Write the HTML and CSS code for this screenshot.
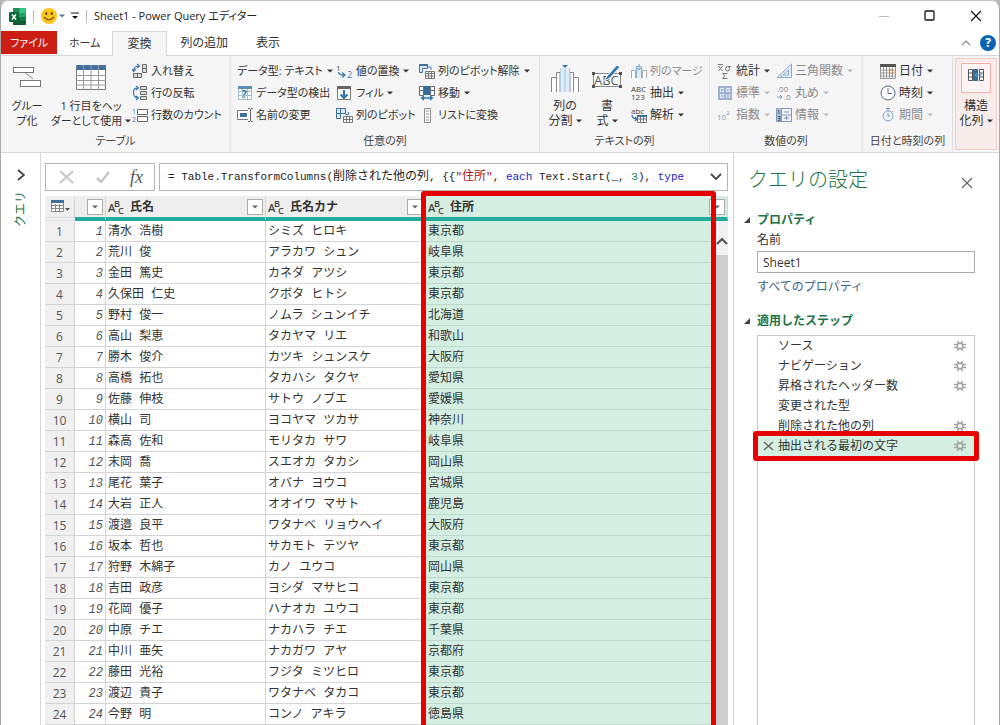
FILE: index.html
```html
<!DOCTYPE html>
<html lang="ja">
<head>
<meta charset="utf-8">
<title>Sheet1 - Power Query エディター</title>
<link rel="stylesheet" href="styles.css">
</head>
<body>
<svg class="defs" aria-hidden="true">
  <symbol id="gear" viewBox="0 0 12 12"><g fill="none" stroke="#a2a2a2" stroke-width="1.500"><circle cx="6" cy="6" r="2.800"/><path d="M4.500 3.500L3.500 1M7.500 3.500L8.500 1M4.500 8.500L3.500 11M7.500 8.500L8.500 11M0 4.500h3M9 4.500h3M0 7.500h3M9 7.500h3"/></g></symbol>
  <symbol id="tri" viewBox="0 0 6 6"><path d="M0 1.500h6L3 4.500z" fill="currentColor"/></symbol>
</svg>
<div class="window">
  <header class="titlebar">
    <svg class="excel" width="17" height="17" viewBox="0 0 17 17"><path d="M4 0h12q1 0 1 1v15q0 1-1 1H4z" fill="#21a366"/><path d="M4 0h6.500v5H4z" fill="#1f8f55"/><path d="M10.500 0H16q1 0 1 1v4h-6.500z" fill="#33c481"/><path d="M4 9h13v7q0 1-1 1H4z" fill="#185c37"/><path d="M10.500 9H17v4h-6.500z" fill="#107c41"/><rect y="4" width="10" height="10" rx="1" fill="#0b6a38"/><path d="M3 6.500l4 5M7 6.500l-4 5" stroke="#fff" stroke-width="1.500"/></svg>
    <span class="sep"></span>
    <button class="quick" aria-label="フィードバック"><svg width="16" height="16" viewBox="0 0 16 16"><circle cx="8" cy="8" r="8" fill="#fbc51c"/><ellipse cx="5.300" cy="5.500" rx="1" ry="1.500" fill="#594112"/><ellipse cx="10.700" cy="5.500" rx="1" ry="1.500" fill="#594112"/><path d="M3 9q5 5.500 10 0" fill="none" stroke="#76520e" stroke-width="1.200"/></svg><svg class="tri slate" width="6" height="6"><use href="#tri"/></svg></button>
    <button class="quick customize" aria-label="カスタマイズ"><svg width="8" height="8" viewBox="0 0 8 8"><path d="M0 1h8" stroke="#111"/><path d="M1 4h6L4 7z" fill="#111"/></svg></button>
    <span class="sep"></span>
    <h1>Sheet1 - Power Query エディター</h1>
    <div class="wincontrols">
      <button aria-label="最小化"><svg width="12" height="12"><path d="M1 6.500h10" stroke="#bbb"/></svg></button>
      <button aria-label="最大化"><svg width="12" height="12"><rect x="1" y="1" width="9" height="9" rx="1" fill="none" stroke="#111" stroke-width="1.300"/></svg></button>
      <button aria-label="閉じる"><svg width="12" height="12"><path d="M1 1l10 10M11 1L1 11" stroke="#111" stroke-width="1.200"/></svg></button>
    </div>
  </header>

  <nav class="tabs">
    <button class="file">ファイル</button>
    <button class="kana">ホーム</button>
    <button class="active">変換</button>
    <button>列の追加</button>
    <button>表示</button>
    <div class="tabtools">
      <button aria-label="リボンを折りたたむ"><svg width="10" height="6"><path d="M1 5l4-4 4 4" fill="none" stroke="#888" stroke-width="1.200"/></svg></button>
      <button class="help" aria-label="ヘルプ">?</button>
    </div>
  </nav>

  <section class="ribbon">
    <div class="group g-table">
      <div class="tools">
        <button class="big"><svg width="30" height="30" viewBox="0 0 30 30"><path d="M13 9.500l8 6.500" stroke="#888"/><g fill="#fff" stroke="#777"><rect x="1.500" y="4.500" width="20" height="5"/><rect x="8.500" y="17.500" width="20" height="6"/></g></svg><span>グルー<br>プ化</span></button>
        <button class="big header-btn"><svg width="30" height="30" viewBox="0 0 30 30"><path d="M.5 2.500h29v24H.5z" fill="#fff" stroke="#777"/><path d="M.5 2h29v5H.5z" fill="#41719c"/><path d="M0 12.500h30M0 17.500h30M0 22h30M7.500 2v25M15 2v25M22.500 2v25" stroke="#999" fill="none"/></svg><span>1 行目をヘッ<br>ダーとして使用<svg class="tri" width="6" height="6"><use href="#tri"/></svg></span></button>
        <div class="smalls">
          <button><svg width="16" height="16"><g fill="#ddd" stroke="#666"><path d="M10.500 1.500h4v8h-4zM10.500 5.500h4M1.500 10.500h8v4h-8zM5.500 10.500v4"/></g><path d="M1.500 8Q2 3 7 3M5 1l2.500 2L5 5M0 6l1.500 2.500L4 6" fill="none" stroke="#3a79ad" stroke-width="1.200"/></svg>入れ替え</button>
          <button><svg width="16" height="16"><g fill="#ddd" stroke="#666"><path d="M8.500 1.500h6v3h-6zM8.500 6.500h6v3h-6zM8.500 11.500h6v3h-6z"/></g><path d="M6 3Q1 3 1.500 8T6 13M4 1l2.500 2L4 5M4 11l2.500 2L4 15" fill="none" stroke="#3a79ad" stroke-width="1.200"/></svg>行の反転</button>
          <button><svg width="16" height="16"><path d="M5.500 2.500h10v5h-10zM5.500 9.500h10v5h-10z" fill="#fff" stroke="#666"/><text x="0" y="7" font-size="7" fill="#3a79ad">1</text><text x="0" y="15" font-size="7" fill="#3a79ad">2</text></svg>行数のカウント</button>
        </div>
      </div>
      <h2>テーブル</h2>
    </div>

    <div class="group g-any">
      <div class="tools">
        <div class="smalls">
          <button class="datatype">データ型: テキスト<svg class="tri" width="6" height="6"><use href="#tri"/></svg></button>
          <button><svg width="16" height="16"><path d="M1.500 2.500h13v12h-13zM1.500 6.500h13M1.500 10.500h13M5.500 2v12M10.500 2v12" fill="#fff" stroke="#a8bccb"/><path d="M1 1h14v3H1z" fill="#5d8fb8"/><text x="5" y="13" font-size="10" font-weight="700" fill="#2d6d9f">?</text></svg>データ型の検出</button>
          <button><svg width="16" height="16"><path d="M11 3.500H.5v9H11" fill="#fff" stroke="#777"/><path d="M3 6h7v4H3z" fill="#41719c"/><path d="M11 1.500h2M14 1.500h2M13.500 2v12M11 14.500h2M14 14.500h2" stroke="#666" fill="none"/></svg>名前の変更</button>
        </div>
        <div class="smalls c2">
          <button><svg width="18" height="16"><text x="0" y="8" font-size="8">1</text><text x="11" y="15" font-size="9" fill="#3a79ad">2</text><path d="M2.500 9q0 3 6 3M6 9.500L9 12l-3 2.500" fill="none" stroke="#3a79ad" stroke-width="1.300"/></svg>値の置換<svg class="tri" width="6" height="6"><use href="#tri"/></svg></button>
          <button><svg width="18" height="16"><path d="M1.500 2.500h13v12h-13z" fill="#fff" stroke="#777"/><path d="M1 1h14v3H1z" fill="#666"/><path d="M8 5v8M4.500 9.500L8 13l3.500-3.500" fill="none" stroke="#2d72aa" stroke-width="2"/></svg>フィル<svg class="tri" width="6" height="6"><use href="#tri"/></svg></button>
          <button><svg width="18" height="16"><path d="M.5 1.500h9v5h-5v5h-4zM.5 6.500h4M4.500 1v5" fill="#dce8f2" stroke="#3d719d"/><path d="M7.500 9.500h9v6h-9zM7.500 12.500h9M10.500 9v6M13.500 9v6" fill="#fff" stroke="#777"/><path d="M9 7l3 1 1-3" fill="none" stroke="#3a79ad"/></svg>列のピボット</button>
        </div>
        <div class="smalls c3">
          <button><svg width="16" height="16"><path d="M.5 1.500h8v4h-5v4h-3z" fill="#dce8f2" stroke="#3d719d"/><path d="M6.500 8.500h9v7h-9zM6.500 10.500h9M6.500 13h9M9.500 8v7M12.500 8v7" fill="#fff" stroke="#777"/><path d="M1 1h8v2H1z" fill="#3d719d"/><path d="M9 4h3v3" stroke="#3a79ad" fill="none"/></svg>列のピボット解除<svg class="tri" width="6" height="6"><use href="#tri"/></svg></button>
          <button><svg width="16" height="16"><path d="M.5 1.500h4v9h-4zM.5 5.500h4M11.500 1.500h4v9h-4zM11.500 5.500h4" fill="#fff" stroke="#667"/><path d="M5 1h6v9H5z" fill="#2f6e9f"/><path d="M3 13h10M5 11l-2.500 2L5 15M11 11l2.500 2L11 15" stroke="#2d72aa" stroke-width="1.300" fill="none"/></svg>移動<svg class="tri" width="6" height="6"><use href="#tri"/></svg></button>
          <button><svg width="16" height="16"><path d="M5.500 1.500h6v14h-6z" fill="#fff" stroke="#888"/><path d="M7 4h3M7 7h3M7 10h3M7 13h3" stroke="#888"/></svg>リストに変換</button>
        </div>
      </div>
      <h2>任意の列</h2>
    </div>

    <div class="group g-text">
      <div class="tools">
        <button class="big"><svg width="30" height="30" viewBox="0 0 30 30"><path d="M1.500 29V14.500h5V29M23.500 29V14.500h5V29M6.500 29V9.500H10V29M20 29V9.500h3.500V29" fill="#fff" stroke="#888"/><path d="M10 5h10v24H10z" fill="#dcecf8"/><path d="M10.500 29V5M19.500 29V5" stroke="#b4cde0"/><path d="M15 5v24" stroke="#a5c4dc"/><path d="M12 2h6l-3 3z" fill="#2d72aa"/></svg><span>列の<br>分割<svg class="tri" width="6" height="6"><use href="#tri"/></svg></span></button>
        <button class="big"><svg width="32" height="30" viewBox="0 0 32 30"><path d="M2.500 10.500h27v13h-27z" fill="#fff" stroke="#888"/><text x="3" y="22" font-size="13" fill="#555">ABC</text><g fill="#555"><path d="M1 9h3v3H1zM28 9h3v3h-3zM1 22h3v3H1zM28 22h3v3h-3z"/></g><path d="M13 18l3-5L26 2l3 2-10 11z" fill="#347ab2" stroke="#f6f5f6"/></svg><span>書<br>式<svg class="tri" width="6" height="6"><use href="#tri"/></svg></span></button>
        <div class="smalls">
          <button class="kana" disabled><svg width="16" height="16"><path d="M.5 15V7.500h4V15M11.500 15V7.500h4V15" fill="#fff" stroke="#aaa"/><path d="M5.500 15V3.500h5V15" fill="#dcecf8" stroke="#8ab1d0"/><path d="M8 1v6M6 5l2 2 2-2" fill="none" stroke="#7ca6c8"/></svg>列のマージ</button>
          <button><svg width="16" height="16"><text x="0" y="7" font-size="8"><tspan x="0">ABC</tspan><tspan x="0" y="15">123</tspan></text></svg>抽出<svg class="tri" width="6" height="6"><use href="#tri"/></svg></button>
          <button><svg width="16" height="16"><text x="0" y="7" font-size="8">abc</text><path d="M6.500 8.500h9v7h-9zM6.500 12h9M9.500 8v7M12.500 8v7" fill="#fff" stroke="#777"/><path d="M6 8h10v2H6z" fill="#3d719d"/><path d="M1 8q0 4 5 4M4 10l2 2-2 2" fill="none" stroke="#2d72aa" stroke-width="1.200"/></svg>解析<svg class="tri" width="6" height="6"><use href="#tri"/></svg></button>
        </div>
      </div>
      <h2>テキストの列</h2>
    </div>

    <div class="group g-num">
      <div class="tools">
        <div class="smalls">
          <button><svg width="16" height="16"><path d="M1 1.500h5M1.500 3l4 5M5.500 3l-4 5M14 3.500h-3q-2.500 0-2.500 2.200T10.500 8t2-2.300T11 3.500M10.500 10.500h-5l2.500 2.300-2.500 2.700h5" fill="none" stroke="#777"/></svg>統計<svg class="tri" width="6" height="6"><use href="#tri"/></svg></button>
          <button disabled><svg width="16" height="16"><path d="M2 2h12v12H2zM8 2v12M2 8h12" fill="#dfe7f1" stroke="#9db2d0" stroke-width="2"/><path d="M4 5h2M5 4v2M10 5h2M4 11h2M10 10h2M10 12h2" stroke="#8097b9"/></svg>標準<svg class="tri" width="6" height="6"><use href="#tri"/></svg></button>
          <button disabled><svg width="16" height="16"><text x="0" y="13" font-size="8" fill="#8b9db8">10<tspan font-size="6" y="8">2</tspan></text></svg>指数<svg class="tri" width="6" height="6"><use href="#tri"/></svg></button>
        </div>
        <div class="smalls c2">
          <button disabled><svg width="16" height="16"><path d="M1 14.500L15.500 1v13.500zM7 12l5.500-5v5z" fill="#e6effa" stroke="#8ba8cd"/><path d="M4 11q2 1 1.500 3" fill="none" stroke="#8ba8cd"/></svg>三角関数<svg class="tri" width="6" height="6"><use href="#tri"/></svg></button>
          <button disabled><svg width="16" height="16"><text y="7" font-size="8" fill="#888"><tspan x="1">.00</tspan><tspan x="8" y="15">.0</tspan></text><path d="M1 12h5M4 10l2 2-2 2" stroke="#7897bd" fill="none"/></svg>丸め<svg class="tri" width="6" height="6"><use href="#tri"/></svg></button>
          <button disabled><svg width="16" height="16"><path d="M.5 1.500h15v13H.5zM5.500 1v13M.5 8h15" fill="#edf2f9" stroke="#8397b4"/><path d="M1 1h4v13H1z" fill="#a8bdd9"/><path d="M2 3.500h1V7M2 9.500h2v4H2M2 11.500h2" fill="none" stroke="#567"/><path d="M8 5h5M8 11h5M10.500 9v4" stroke="#8397b4"/></svg>情報<svg class="tri" width="6" height="6"><use href="#tri"/></svg></button>
        </div>
      </div>
      <h2>数値の列</h2>
    </div>

    <div class="group g-date">
      <div class="tools">
        <div class="smalls">
          <button><svg width="16" height="16"><path d="M.5 1.500h15v14H.5zM3.500 4v11M6.500 4v11M9.500 4v11M12.500 4v11M.5 7h15M.5 10h15M.5 13h15" fill="#fff" stroke="#999"/><path d="M0 1h16v3H0z" fill="#555"/><path d="M9.500 7h3v3h-3z" fill="#fff" stroke="#dc7a28"/></svg>日付<svg class="tri" width="6" height="6"><use href="#tri"/></svg></button>
          <button><svg width="16" height="16"><circle cx="8" cy="8" r="7" fill="#fff" stroke="#4d6c87"/><path d="M8 3v5.500h4" fill="none" stroke="#4d6c87"/></svg>時刻<svg class="tri" width="6" height="6"><use href="#tri"/></svg></button>
          <button disabled><svg width="16" height="16"><circle cx="8" cy="9" r="5" fill="#eef4fa" stroke="#8ba3bd"/><path d="M8 6v3h2M8 4V2M6 1.500h4M12 4l1 1" fill="none" stroke="#7893b1"/></svg>期間<svg class="tri" width="6" height="6"><use href="#tri"/></svg></button>
        </div>
      </div>
      <h2>日付と時刻の列</h2>
    </div>

    <div class="group g-struct">
      <button class="struct"><span class="structicon"><svg width="16" height="14"><path d="M.5 1.500h4v11h-4zM.5 5h4M.5 9h4M11.500 1.500h4v11h-4zM11.500 5h4M11.500 9h4" fill="#fff" stroke="#555"/><path d="M5 1h5v12H5z" fill="#2f6e9f"/><path d="M7 7h6M9 5L7 7l2 2M11.500 5l2 2-2 2" fill="none" stroke="#5ba0d6"/></svg></span><span>構造<br>化列<svg class="tri" width="6" height="6"><use href="#tri"/></svg></span></button>
    </div>
  </section>

  <main class="workspace">
    <aside class="rail">
      <button aria-label="クエリ ウィンドウを展開"><svg width="8" height="12"><path d="M1 1l6 5-6 5" fill="none" stroke="#444" stroke-width="1.800"/></svg></button>
      <span>クエリ</span>
    </aside>

    <section class="editor">
      <div class="formula">
        <div class="fxbox">
          <button aria-label="取り消し"><svg width="16" height="14"><path d="M1 1l13 12M14 1L1 13" stroke="#c6c6c6" stroke-width="2"/></svg></button>
          <button aria-label="確定"><svg width="14" height="12"><path d="M1 7l4 4 8-10" fill="none" stroke="#c6c6c6" stroke-width="2.500"/></svg></button>
          <button class="fx" aria-label="ステップの追加">fx</button>
        </div>
        <div class="fxtext" role="textbox">
          <code>= Table.TransformColumns(<span class="ja">削除された他の列</span>, {{<span class="str">"<span class="ja">住所</span>"</span>, <span class="key">each</span> Text.Start(_, <span class="num">3</span>), <span class="key">type</span></code>
          <button aria-label="数式バーを展開"><svg width="12" height="8"><path d="M1 1l5 5 5-5" fill="none" stroke="#444" stroke-width="1.800"/></svg></button>
        </div>
      </div>

      <div class="grid">
        <table>
          <colgroup><col class="w-row"><col class="w-idx"><col class="w-name"><col class="w-kana"><col></colgroup>
          <thead><tr>
            <th class="corner"><button aria-label="テーブル メニュー"><svg width="20" height="13"><path d="M.5 1.500h12v10H.5zM.5 5.500h12M.5 8.500h12M4.500 4v8M8.500 4v8" fill="#fff" stroke="#888"/><path d="M0 0h13v3H0z" fill="#3d719d"/><path d="M14 8h5l-2.500 3z" fill="#555"/></svg></button></th>
            <th><div class="head"><button class="filter" aria-label="フィルター"><svg class="tri" width="6" height="6"><use href="#tri"/></svg></button></div></th>
            <th><div class="head"><svg class="abc" width="18" height="18"><text x="0" y="14" font-size="11">A<tspan x="6" y="9" font-size="9">B</tspan><tspan x="10" y="16" font-size="9">C</tspan></text></svg>氏名<button class="filter" aria-label="フィルター"><svg class="tri" width="6" height="6"><use href="#tri"/></svg></button></div></th>
            <th><div class="head"><svg class="abc" width="18" height="18"><text x="0" y="14" font-size="11">A<tspan x="6" y="9" font-size="9">B</tspan><tspan x="10" y="16" font-size="9">C</tspan></text></svg>氏名カナ<button class="filter" aria-label="フィルター"><svg class="tri" width="6" height="6"><use href="#tri"/></svg></button></div></th>
            <th class="sel"><div class="head"><svg class="abc" width="18" height="18"><text x="0" y="14" font-size="11">A<tspan x="6" y="9" font-size="9">B</tspan><tspan x="10" y="16" font-size="9">C</tspan></text></svg>住所<button class="filter" aria-label="フィルター"><svg class="tri" width="6" height="6"><use href="#tri"/></svg></button></div></th>
          </tr></thead>
          <tbody>
            <tr><th>1</th><td>1</td><td>清水 浩樹</td><td>シミズ ヒロキ</td><td>東京都</td></tr>
            <tr><th>2</th><td>2</td><td>荒川 俊</td><td>アラカワ シュン</td><td>岐阜県</td></tr>
            <tr><th>3</th><td>3</td><td>金田 篤史</td><td>カネダ アツシ</td><td>東京都</td></tr>
            <tr><th>4</th><td>4</td><td>久保田 仁史</td><td>クボタ ヒトシ</td><td>東京都</td></tr>
            <tr><th>5</th><td>5</td><td>野村 俊一</td><td>ノムラ シュンイチ</td><td>北海道</td></tr>
            <tr><th>6</th><td>6</td><td>高山 梨恵</td><td>タカヤマ リエ</td><td>和歌山</td></tr>
            <tr><th>7</th><td>7</td><td>勝木 俊介</td><td>カツキ シュンスケ</td><td>大阪府</td></tr>
            <tr><th>8</th><td>8</td><td>高橋 拓也</td><td>タカハシ タクヤ</td><td>愛知県</td></tr>
            <tr><th>9</th><td>9</td><td>佐藤 伸枝</td><td>サトウ ノブエ</td><td>愛媛県</td></tr>
            <tr><th>10</th><td>10</td><td>横山 司</td><td>ヨコヤマ ツカサ</td><td>神奈川</td></tr>
            <tr><th>11</th><td>11</td><td>森高 佐和</td><td>モリタカ サワ</td><td>岐阜県</td></tr>
            <tr><th>12</th><td>12</td><td>末岡 喬</td><td>スエオカ タカシ</td><td>岡山県</td></tr>
            <tr><th>13</th><td>13</td><td>尾花 葉子</td><td>オバナ ヨウコ</td><td>宮城県</td></tr>
            <tr><th>14</th><td>14</td><td>大岩 正人</td><td>オオイワ マサト</td><td>鹿児島</td></tr>
            <tr><th>15</th><td>15</td><td>渡邉 良平</td><td>ワタナベ リョウヘイ</td><td>大阪府</td></tr>
            <tr><th>16</th><td>16</td><td>坂本 哲也</td><td>サカモト テツヤ</td><td>東京都</td></tr>
            <tr><th>17</th><td>17</td><td>狩野 木綿子</td><td>カノ ユウコ</td><td>岡山県</td></tr>
            <tr><th>18</th><td>18</td><td>吉田 政彦</td><td>ヨシダ マサヒコ</td><td>東京都</td></tr>
            <tr><th>19</th><td>19</td><td>花岡 優子</td><td>ハナオカ ユウコ</td><td>東京都</td></tr>
            <tr><th>20</th><td>20</td><td>中原 チエ</td><td>ナカハラ チエ</td><td>千葉県</td></tr>
            <tr><th>21</th><td>21</td><td>中川 亜矢</td><td>ナカガワ アヤ</td><td>京都府</td></tr>
            <tr><th>22</th><td>22</td><td>藤田 光裕</td><td>フジタ ミツヒロ</td><td>東京都</td></tr>
            <tr><th>23</th><td>23</td><td>渡辺 貴子</td><td>ワタナベ タカコ</td><td>東京都</td></tr>
            <tr><th>24</th><td>24</td><td>今野 明</td><td>コンノ アキラ</td><td>徳島県</td></tr>
          </tbody>
        </table>
        <div class="scrollbar"><svg width="12" height="8"><path d="M1 7l5-5 5 5" fill="none" stroke="#555" stroke-width="2.200"/></svg><div class="thumb"></div></div>
        <div class="mark column-mark"></div>
      </div>
    </section>

    <aside class="settings">
      <div class="settings-title"><h2>クエリの設定</h2><button aria-label="閉じる"><svg width="12" height="12"><path d="M1 1l10 10M11 1L1 11" stroke="#666" stroke-width="1.200"/></svg></button></div>
      <h3><svg width="6" height="6"><path d="M6 0v6H0z" fill="#444"/></svg>プロパティ</h3>
      <div class="props">
        <label for="qname">名前</label>
        <input id="qname" type="text" value="Sheet1">
        <a href="#">すべてのプロパティ</a>
      </div>
      <h3 class="steps-title"><svg width="6" height="6"><path d="M6 0v6H0z" fill="#444"/></svg>適用したステップ</h3>
      <ul class="steps">
        <li><span>ソース</span><button aria-label="設定"><svg width="12" height="12"><use href="#gear"/></svg></button></li>
        <li><span>ナビゲーション</span><button aria-label="設定"><svg width="12" height="12"><use href="#gear"/></svg></button></li>
        <li><span>昇格されたヘッダー数</span><button aria-label="設定"><svg width="12" height="12"><use href="#gear"/></svg></button></li>
        <li><span>変更された型</span></li>
        <li><span>削除された他の列</span><button aria-label="設定"><svg width="12" height="12"><use href="#gear"/></svg></button></li>
        <li class="current"><button class="del" aria-label="削除"><svg width="11" height="10"><path d="M1 1l9 8M10 1L1 9" stroke="#666" stroke-width="1.500"/></svg></button><span>抽出される最初の文字</span><button aria-label="設定"><svg width="12" height="12"><use href="#gear"/></svg></button><div class="mark step-mark"></div></li>
      </ul>
    </aside>
  </main>
</div>
</body>
</html>
```
FILE: styles.css
```css
* { box-sizing: border-box; }
body {
  margin: 0;
  background: #b9b5b9;
  color: #333;
  font: 12px/16px "Open Sans", "Noto Sans CJK JP", sans-serif;
}
h1, h2, h3, ul { margin: 0; padding: 0; font-size: inherit; font-weight: 400; }
button {
  padding: 0;
  border: 0;
  background: none;
  color: inherit;
  font: inherit;
  text-align: inherit;
  white-space: nowrap;
}
svg { flex: none; font-family: "Open Sans", sans-serif; fill: #444; }
.defs { position: absolute; width: 0; height: 0; }
.tri { color: #333; }
.window {
  display: flex;
  flex-direction: column;
  height: 100vh;
  overflow: hidden;
  border-left: 1px solid #aaa;
  border-right: 1px solid #aaa;
  border-top: 1px solid #c4c4c4;
  border-radius: 8px 8px 0 0;
  background: #fff;
}

/* title bar */
.titlebar { display: flex; align-items: center; height: 30px; padding-left: 8px; flex: none; }
.sep { width: 1px; height: 13px; margin: 0 7px; background: #bbb; }
.quick { display: flex; align-items: center; gap: 2px; }
.customize { margin-left: 6px; }
.slate { color: #4d7d8d; }
.titlebar h1 { color: #222; font-size: 11px; font-feature-settings: "palt"; white-space: nowrap; }
.wincontrols { display: flex; margin-left: auto; }
.wincontrols button { display: flex; justify-content: center; width: 46px; }

/* ribbon tabs */
.tabs { display: flex; height: 25px; flex: none; border-bottom: 1px solid #d8d6d8; font-feature-settings: "palt"; }
.tabs > button { height: 24px; padding: 0 14px; color: #333; }
.tabs > .kana { padding: 0 12px; }
.tabs > .file { height: 23px; width: 56px; padding: 0; background: #cb1d12; color: #fff; font-size: 11px; text-align: center; }
.tabs > .active { height: 25px; border: 1px solid #d8d6d8; border-bottom: 0; background: #f6f5f6; }
.kana { font-size: 11px; }
.tabtools { display: flex; align-items: center; gap: 9px; margin-left: auto; padding-right: 3px; }
.tabtools button { display: flex; }
.tabtools .help {
  justify-content: center;
  width: 16px;
  height: 16px;
  border-radius: 50%;
  background: #0a64b4;
  color: #fff;
  font-weight: 700;
}

/* ribbon */
.ribbon {
  display: grid;
  grid-template-columns: minmax(0, 230fr) minmax(0, 309fr) minmax(0, 170fr) minmax(0, 153fr) minmax(0, 90fr) minmax(0, 46fr);
  height: 97px;
  flex: none;
  border-bottom: 1px solid #d8d6d8;
  background: #f6f5f6;
  font-feature-settings: "palt";
}
.group { display: flex; flex-direction: column; justify-content: space-between; padding: 4px 0 3px; border-right: 1px solid #e0dee0; }
.group h2 { color: #444; font-size: 11px; text-align: center; }
.g-table, .g-any { font-size: 11px; }
.tools { display: flex; }
.smalls { display: grid; grid-auto-rows: 22px; }
.smalls button { display: flex; align-items: center; gap: 3px; }
.smalls .tri { margin-left: 1px; }
.ribbon button:disabled { color: #8c8a8c; }
.ribbon button:disabled .tri { color: #bbb; }
.big { display: flex; flex-direction: column; align-items: center; gap: 5px; padding-top: 3px; line-height: 15px; text-align: center; }
.big .tri, .struct .tri { margin-left: 3px; vertical-align: 1px; }
.g-table .big { width: 52px; }
.g-table .header-btn { width: 76px; }
.g-table .smalls { margin-left: 3px; }
.g-any .tools { padding-left: 6px; }
.g-any .smalls { width: 99px; }
.g-any .c2 { width: 83px; }
.g-any .c2 button { gap: 2px; }
.g-text .tools { padding-left: 4px; }
.g-text .big { width: 42px; }
.g-text .smalls { margin-left: 3px; }
.g-num .tools { padding-left: 7px; }
.g-num .smalls { width: 59px; }
.g-date .tools { padding-left: 17px; }
.g-struct { padding: 2px 2px; border: 0; }
.struct {
  display: flex;
  flex-direction: column;
  align-items: center;
  gap: 5px;
  height: 92px;
  padding-top: 4px;
  border: 1px solid #f0cfc9;
  background: #f8eceb;
  line-height: 15px;
  text-align: center;
}
.structicon { display: flex; justify-content: center; width: 30px; height: 30px; padding-top: 4px; border: 1px solid #f0b1a8; background: #fdf4f3; }

/* workspace */
.workspace { display: flex; flex: 1; min-height: 0; }
.rail { display: flex; flex-direction: column; align-items: center; gap: 10px; width: 40px; padding-top: 16px; border-right: 1px solid #d8d6d8; color: #217346; }
.rail button { display: flex; }
.rail span { writing-mode: vertical-rl; text-orientation: sideways; transform: rotate(180deg); }
.editor { display: flex; flex-direction: column; flex: 1; min-width: 0; padding: 10px 5px 0 4px; }
.formula { display: flex; gap: 4px; height: 28px; flex: none; margin-bottom: 5px; }
.fxbox, .fxtext { display: flex; align-items: center; border: 1px solid #b4b4b4; }
.fxbox { justify-content: space-between; width: 110px; padding: 0 11px 0 13px; }
.fxbox button, .fxtext button { display: flex; }
.fxbox .fx { color: #555; font: italic 18px/24px "Liberation Serif", serif; }
.fxtext { flex: 1; min-width: 0; justify-content: space-between; padding: 0 5px 0 8px; }
code { color: #222; font: 11px/16px "Liberation Mono", "Noto Sans CJK JP", monospace; white-space: nowrap; }
.ja { font-size: 12px; }
.str { color: #a31515; }
.key { color: #1c1cc0; }
.num { color: #098658; }

.grid { position: relative; flex: 1; min-height: 0; }
table { width: 100%; table-layout: fixed; border-collapse: separate; border-spacing: 0; }
.w-row { width: 30px; }
.w-idx { width: 31px; }
.w-name, .w-kana { width: 160px; }
thead th { height: 25px; padding: 0; border-bottom: 4px solid #22aca0; border-right: 1px solid #d4d4d4; background: #eee; font-weight: 700; text-align: left; }
thead .corner { border-bottom: 4px double #e0e0e0; }
.corner button { display: flex; margin-left: 6px; }
thead th.sel { background: #d4efe1; }
.head { display: flex; align-items: center; gap: 4px; height: 21px; padding: 0 2px; }
.abc { font-weight: 600; }
.filter { display: flex; align-items: center; justify-content: center; width: 16px; height: 16px; margin-left: auto; border: 1px solid #ababab; background: #fff; }
.filter .tri { color: #666; }
tbody td, tbody th { height: 21px; padding: 1px 2px 0; border-bottom: 1px solid #d4d4d4; border-right: 1px solid #d4d4d4; line-height: 16px; }
tbody th { background: #f0f0f0; color: #555; font-weight: 400; text-align: center; }
tbody td { overflow: hidden; font-family: "Liberation Mono", "Noto Sans CJK JP", monospace; white-space: nowrap; }
tbody td:nth-child(2) { color: #555; font-style: italic; text-align: right; }
tbody td:last-child { background: #d4efe1; border-bottom-color: #c0d8cb; }
.scrollbar { position: absolute; top: 25px; right: 0; bottom: 0; display: flex; flex-direction: column; align-items: center; gap: 10px; width: 13px; padding-top: 16px; background: #f1f1f1; }
.thumb { flex: 1; width: 100%; background: #cdcdcd; }
.mark { position: absolute; border: 5px solid #e60000; border-radius: 3px; pointer-events: none; }
.column-mark { top: -5px; bottom: -8px; left: 376px; right: 12px; }

/* query settings */
.settings { display: flex; flex-direction: column; width: 266px; padding: 14px 24px 0 10px; border-left: 1px solid #d8d6d8; }
.settings-title { display: flex; align-items: center; justify-content: space-between; padding-left: 4px; }
.settings-title h2 { color: #217346; font-size: 20px; font-weight: 300; line-height: 26px; }
.settings-title button { display: flex; margin: 6px 2px 0 0; }
.settings h3 { display: flex; align-items: center; gap: 7px; margin-top: 19px; color: #217346; font-weight: 700; line-height: 16px; }
.props { display: flex; flex-direction: column; padding-left: 13px; }
.props label { margin: 4px 0 3px; }
.props input { width: 100%; height: 22px; padding: 0 5px; border: 1px solid #ababab; background: #fff; color: #333; font: inherit; }
.props a { margin-top: 6px; color: #3b5f86; text-decoration: none; }
.settings .steps-title { margin-top: 18px; }
.steps { flex: 1; margin: 6px 0 0 13px; border: 1px solid #c6c6c6; border-bottom: 0; list-style: none; }
.steps li { position: relative; display: flex; align-items: center; height: 20px; padding: 0 8px 0 20px; white-space: nowrap; }
.steps li button { display: flex; margin-left: auto; }
.steps .current { padding-left: 5px; background: #d4efe1; }
.steps .current .del { margin: 0 4px 0 0; }
.step-mark { top: -5px; right: -5px; bottom: -5px; left: -5px; }
```
